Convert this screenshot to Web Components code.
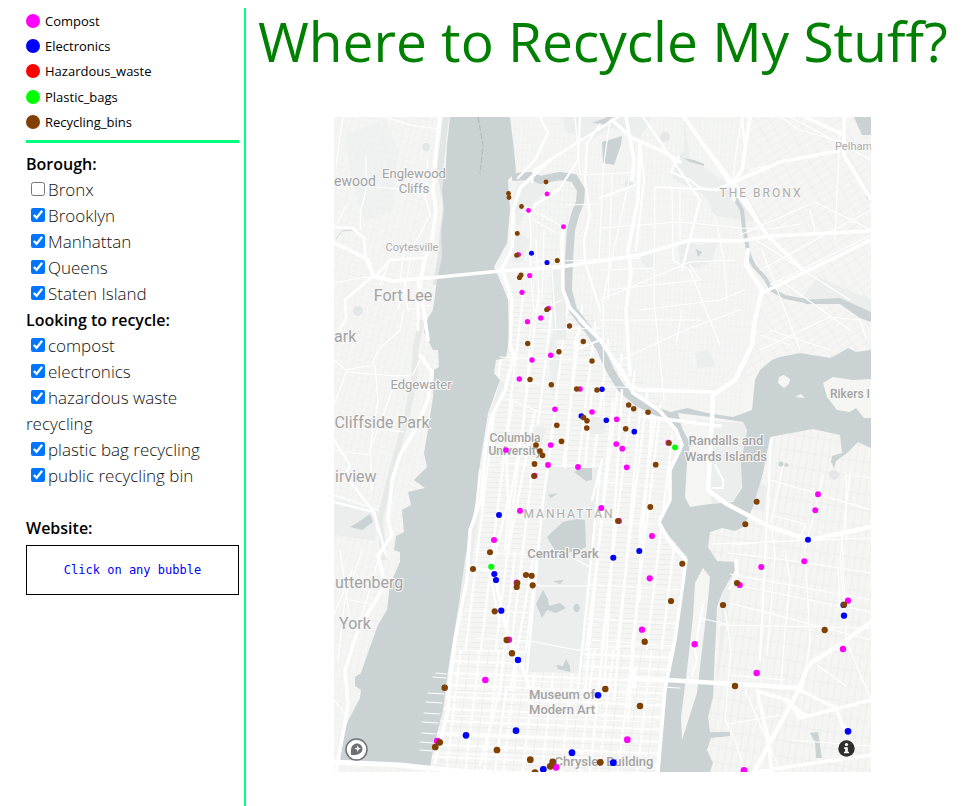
<!DOCTYPE html>
<html lang="en">
<head>
<meta charset="utf-8">
<title>Where to Recycle My Stuff?</title>
<style>
  body { margin: 0; background: #fff; font-family: "Open Sans", "Noto Sans", sans-serif; color: #000; }
</style>
</head>
<body>
<recycle-app></recycle-app>

<template id="t-app">
  <style>
    :host { display: grid; grid-template-columns: 246px minmax(0, 1fr); min-height: 100vh; box-sizing: border-box; padding-top: 8px; }
    aside { border-right: 2px solid #00ff7f; padding: 0 5px 0 26px; }
    .legend { display: grid; grid-auto-rows: 1fr; min-height: 127px; }
    hr { border: 0; height: 3px; margin: 5px 0 8px; background: #00ff7f; }
    main { min-width: 0; }
    h1 { margin: 0; padding-left: 12px; font-size: 55px; line-height: 66px; font-weight: 400; color: #008000; white-space: nowrap; }
    recycle-map { margin: 43px 107px 0 88px; }
  </style>
  <aside>
    <div class="legend">
      <legend-item style="--dot:#ff00ff">Compost</legend-item>
      <legend-item style="--dot:#0000ff">Electronics</legend-item>
      <legend-item style="--dot:#ff0000">Hazardous_waste</legend-item>
      <legend-item style="--dot:#00ff00">Plastic_bags</legend-item>
      <legend-item style="--dot:#804000">Recycling_bins</legend-item>
    </div>
    <hr>
    <filter-group heading="Borough:">
      <filter-check>Bronx</filter-check>
      <filter-check checked>Brooklyn</filter-check>
      <filter-check checked>Manhattan</filter-check>
      <filter-check checked>Queens</filter-check>
      <filter-check checked>Staten Island</filter-check>
    </filter-group>
    <filter-group heading="Looking to recycle:">
      <filter-check checked>compost</filter-check>
      <filter-check checked>electronics</filter-check>
      <filter-check checked>hazardous waste recycling</filter-check>
      <filter-check checked>plastic bag recycling</filter-check>
      <filter-check checked>public recycling bin</filter-check>
    </filter-group>
    <site-box heading="Website:">Click on any bubble</site-box>
  </aside>
  <main>
    <h1>Where to Recycle My Stuff?</h1>
    <recycle-map></recycle-map>
  </main>
</template>

<template id="t-legend">
  <style>
    :host { display: flex; align-items: center; gap: 5px; font-size: 13px; line-height: 20px; }
    i { width: 14px; height: 14px; border-radius: 50%; background: var(--dot); }
  </style>
  <i></i><span><slot></slot></span>
</template>

<template id="t-group">
  <style>
    :host { display: block; font-size: 17px; line-height: 26px; }
    h2 { margin: 0; font-size: 16px; line-height: 26px; font-weight: 600; }
    fieldset { margin: 0; padding: 0; border: 0; min-width: 0; }
  </style>
  <h2 id="h"></h2>
  <fieldset aria-labelledby="h"><slot></slot></fieldset>
</template>

<template id="t-check">
  <style>
    :host { display: block; font-weight: 300; color: #111; }
    input { width: 14px; height: 14px; margin: 0 3px 0 5px; vertical-align: baseline; }
  </style>
  <label><input type="checkbox"><slot></slot></label>
</template>

<template id="t-site">
  <style>
    :host { display: block; margin-top: 26px; }
    h2 { margin: 0 0 4px; font-size: 16px; line-height: 26px; font-weight: 600; }
    div { border: 1px solid #000; padding: 15px 10px; text-align: center; font: 12px/18px "DejaVu Sans Mono", monospace; }
    a { color: #0000ff; text-decoration: none; }
  </style>
  <h2></h2>
  <div><a href="#"><slot></slot></a></div>
</template>

<template id="t-map">
  <style>
    :host { display: block; position: relative; }
    svg.map { display: block; width: 100%; height: auto; }
    .land { fill: #f5f5f4; }
    .water { fill: #cad2d3; }
    .park { fill: #eceeee; }
    .creek { fill: none; stroke: #cad2d3; stroke-linejoin: round; }
    .road { fill: none; stroke: #fff; stroke-linejoin: round; stroke-linecap: round; }
    text { font-family: Roboto, "Liberation Sans", sans-serif; fill: #a3a3a3; stroke: #f7f7f6; stroke-width: 2px; paint-order: stroke; text-anchor: middle; }
    .c { font-size: 16px; }
    .d { font-size: 14px; }
    .s { font-size: 12px; font-weight: 500; }
    .l { font-size: 13px; font-weight: 500; }
    .n { font-weight: 400; }
    .m { font-size: 11px; fill: #adadad; }
    .b { font-size: 12px; fill: #adadad; letter-spacing: 2px; }
    .start { text-anchor: start; }
    a, button { position: absolute; padding: 0; border: 0; background: none; line-height: 0; cursor: pointer; }
    a { left: 11px; bottom: 11px; }
    button { right: 16px; bottom: 15px; }
  </style>
  <svg class="map" viewBox="334 117 537 655" role="img" aria-label="Map of recycling locations">
    <defs>
      <pattern id="man" width="15" height="5" patternUnits="userSpaceOnUse" patternTransform="matrix(1 .04 -.12 1 0 0)"><path d="M0 .5H15" stroke="#e8eaea" stroke-width=".8"/><path d="M1 0V5" stroke="#fff" stroke-width="2.2"/></pattern>
      <pattern id="mid" width="19" height="12" patternUnits="userSpaceOnUse" patternTransform="matrix(1 .04 -.12 1 3 2)"><path d="M0 2H19M1 0V12" stroke="#fff" stroke-width="2" fill="none"/><path d="M0 7H19M10 0V12" stroke="#eaecec" stroke-width=".7"/></pattern>
      <pattern id="nj" width="13" height="6" patternUnits="userSpaceOnUse" patternTransform="rotate(14)"><path d="M0 1H13M1 0V6M7 0V6" stroke="#edefee" stroke-width=".7" fill="none"/></pattern>
      <pattern id="bx" width="9" height="14" patternUnits="userSpaceOnUse" patternTransform="rotate(4)"><path d="M0 1H9M0 8H9M1 0V14M5 0V14" stroke="#eef0ef" stroke-width=".7" fill="none"/></pattern>
      <pattern id="be" width="12" height="7" patternUnits="userSpaceOnUse" patternTransform="rotate(-32)"><path d="M0 1H12M1 0V7" stroke="#ebedec" stroke-width=".7" fill="none"/></pattern>
      <pattern id="qn" width="7" height="16" patternUnits="userSpaceOnUse" patternTransform="rotate(9)"><path d="M0 1H7M1 0V16" stroke="#e9ebea" stroke-width=".7" fill="none"/></pattern>
    </defs>
    <rect class="land" x="334" y="117" width="537" height="655"/>
    <path fill="url(#nj)" d="M334 117H450V772H334Z"/>
    <path fill="url(#bx)" d="M500 117H735L750 240L765 290L740 420L660 410L570 320Z"/>
    <path fill="url(#be)" d="M735 117H871V380H740L765 290L745 220Z"/>
    <path fill="url(#qn)" d="M705 425H871V772H705Z"/>
    <path fill="url(#man)" d="M505 290H570L670 415L690 560L670 650H440L480 450Z"/>
    <path fill="url(#mid)" d="M442 650H680L660 772H425Z"/>
    <path fill="url(#bx)" d="M505 180H580L570 290H505Z"/>

    <!-- parks and green edges -->
    <g class="park">
      <path d="M548 467H599L580 673L527 672Z"/>
      <path d="M334 499L378 511L375 541L334 535Z"/>
      <path d="M517 183L542 179L546 190L525 212L517 230L514 200Z"/>
      <path d="M516 230L530 240L522 262L512 262Z"/>
      <path d="M537 425L547 428L536 460L527 452Z"/>
      <path d="M551 270H566V340H553Z"/>
      <path d="M587 418L606 414L604 434L590 434Z"/>
      <path d="M553 330L560 360L553 400L548 350Z"/>
      <path d="M500 380L490 415L480 500L465 560L458 610H464L474 550L484 480L492 420L506 385Z"/>
      <path d="M562 117H652L640 138L612 128L590 140L566 132Z"/>
      <path d="M684 117L690 158L730 185L756 215L752 222L715 216L704 195L672 178L676 160L684 150Z"/>
      <path d="M678 240L700 245L718 242L712 260L700 268L680 266Z"/>
      <path d="M637 255L656 251V270L646 267Z"/>
      <path d="M818 277L871 300V312L840 300L800 300Z"/>
      <path d="M695 353L708 350L716 366L698 368Z"/>
      <path d="M748 480L768 486L764 512L742 506Z"/>
      <path d="M722 593L732 580L729 605L722 650L716 700Z"/>
      <path d="M345 134L385 120L398 150L392 210L365 222L352 180Z" opacity=".6"/>
    </g>
    <path d="M446 117L440 170L446 205L440 260L436 285" fill="none" stroke="#dfe1e1" stroke-width="6" opacity=".8"/>
    <path d="M422 320L416 345L414 380L406 420L392 470L380 520L384 560" fill="none" stroke="#e3e5e5" stroke-width="6" opacity=".7"/>

    <!-- rivers -->
    <path class="water" d="M450 117H510L514 150L516 172L508 180L510 210L507 243L494 267L503 287L508 300L509 340L506 358L496 360L494 373L500 380L488 413L480 463L477 497L470 530L465 560L458 610L448 670L443 710L433 750L430 767L340 761L342 747L347 723L360 698L361 690L355 686V677L361 673L370 647L378 625L387 610L390 585L400 562V552L394 550L396 536L404 532L402 510L411 505L408 492L425 488L414 480L427 467L424 453L428 430L433 397L434 370L439 367L438 350H433L424 332L428 318L433 310L437 280L442 257L441 232L444 210L442 190L446 165L447 145Z"/>
    <path class="creek" stroke-width="8" d="M512 177L532 176L540 180L560 176L574 178L581 190L580 202L575 215L571 230L569 260L568 290L573 310L590 332L601 350L610 370L621 388L637 402L652 410L670 416"/>
    <path class="water" d="M667 413L687 408L707 413L733 417L752 410L755 380L760 370L772 360L780 357L800 353L830 358L838 354L848 348L856 352L871 350V448L858 442L847 453L836 461L834 468L831 462L832 456L842 453L840 435L813 429L770 437L763 473L753 507L743 527L735 531L722 528L710 532L708 547L717 561L734 562L735 570L722 593L717 607L715 650L713 697L708 717L710 732L730 732V736L711 738L707 750L713 763L710 772H658L663 717L667 683L675 640L680 590L687 557L670 537L660 522L669 503L670 473L682 450L680 437Z"/>
    <path class="creek" stroke-width="4" d="M735 198L742 210L744 228L748 250L750 258L754 266L765 278L772 290L785 297L806 301"/>
    <path class="water" d="M800 300L840 298L871 312V322L860 318L840 304L806 304Z"/>
    <path class="land" d="M678 413L710 417L743 422L747 430L741 463L742 488L733 502L710 504L690 507L685 497L687 463L690 443L682 428Z"/>
    <path class="park" d="M694 420L743 423L746 430L741 463L741 488L733 501L712 503L708 480L712 430Z"/>
    <path class="land" d="M871 379L853 380L833 377L823 383L827 397L837 410L850 412L856 408L864 418H871Z"/>
    <path class="land" d="M779 377L784 375L790 379L789 384L784 388L778 383ZM795 397L801 394L805 398Z"/>
    <path class="land" d="M703 568L710 577L708 600L702 650L697 693L682 740L681 717L687 670L693 617L695 583Z"/>
    <g class="water">
      <path d="M547 537L551 533L563 522L576 519L585 520L586 547L577 552H556Z"/>
      <path d="M574 472L581 468H592V480L586 481Z"/><path d="M548 495L558 493L551 498Z"/>
      <path d="M543 590L548 599L549 606L560 603L566 608L556 613L547 610L542 618L536 604Z"/>
      <path d="M553 581L564 580L560 584Z"/><ellipse cx="576.500" cy="608" rx="3" ry="4"/>
      <path d="M566 659L570 666V672L558 669L556 665L563 666Z"/>
      <path d="M350 527L357 523L370 514L373 522L362 530Z"/>
      <path d="M602 142L622 136L621 145L614 165L603 163Z"/>
      <path d="M592 123L608 117H614L604 124Z"/>
      <path d="M854 117H871V135H862Z"/><path d="M865 196L871 197V203Z"/>
      <path d="M696 249L702 252L698 257Z"/>
      <circle cx="781" cy="464" r="2.500"/><circle cx="786.500" cy="465" r="2"/>
      <path d="M810 733L818 732L822 758H816L815 742Z"/>
      <path d="M683 158L694 160L704 164V166L690 162Z"/>
    </g>
    <g fill="#e4e7e7"><circle cx="665" cy="137" r="5"/><circle cx="629" cy="184" r="4"/><circle cx="834" cy="475" r="5"/><circle cx="426" cy="147" r="4"/><circle cx="358" cy="311" r="5"/></g>

    <path d="M478 117L483 145L480 174" fill="none" stroke="#b6bbbd" stroke-width="1.200" stroke-dasharray="6 2"/>
    <path d="M336 239L342 231L354 230" fill="none" stroke="#d3d9da" stroke-width="1"/>
    <path class="road" stroke-width="1" d="M436 673L446 674M433 677L446 678M428 693L444 694M426 702L442 703M424 713L440 714M422 722L438 723M422 733L436 734M420 742L434 743M420 750L432 751"/>

    <!-- small roads -->
    <g class="road" stroke-width="1.200">
      <path d="M343 117L336 165M385 117L410 125L440 129M366 156V190L361 210L360 230M338 222L346 205M366 186L430 192M428 160L425 195L430 215L412 250L407 280L398 310M334 283L365 277L383 280M404 250L400 282M388 265L380 285M334 360L346 370L372 365L378 350L400 330L404 310M346 372L334 405M347 372L395 376L413 375L420 360M375 365L378 400L370 450L372 490M398 375L385 410L370 450M334 450L368 455M334 495L378 510M334 425L404 432M404 280L408 310L430 305"/>
      <path d="M340 550L350 620M362 550L345 600L338 660M334 615L352 570M350 600L375 605M334 700L346 715M358 630L378 560L384 550"/>
      <path d="M529 210L531 235L530 270L534 310L528 345M545 200L560 190M520 212L545 215M530 218L555 232M522 205L560 225M540 330L600 328M552 270L556 330M536 240L540 320M544 230L542 300M566 205L600 204M530 262L640 258M540 310L562 300"/>
      <path d="M575 117L580 175L640 172M610 120L603 170L599 260M629 180L603 300L604 420M655 188L654 300L664 400M672 190L673 260L690 270L720 345M600 228L680 222L762 230L800 224M600 300L690 262L735 260M680 190V240M715 215L724 260L727 300M606 290L700 280L690 265M640 310L720 300L744 290M620 360L690 328L740 310M682 310L676 345M600 320L700 320M600 270L655 268M612 175L608 300"/>
      <path d="M742 117L735 160L733 180M780 117L800 130L871 150M790 117L871 160M750 170L790 160L842 150M740 235L815 202L871 230M760 270L871 210M770 285L871 235M780 280L850 330M756 240L850 300M762 250L800 350M840 130L835 240M810 210L815 230M760 350L830 317L860 320L866 338M770 330L830 350M760 335L790 345"/>
      <path d="M500 357L600 361M520 383L690 390M505 398L540 412L606 417M500 463L597 467M480 516L546 518M474 552L540 555M465 611L532 613M475 638L530 641L577 650L640 645M455 678L600 684L680 688M452 692L660 699M448 715L655 722M445 735L655 742M440 753L650 760M600 482L655 485M598 522L655 524M590 585L680 590M585 618L675 624M588 640L672 646M530 580L540 586L590 586M577 560L590 567"/>
      <path d="M728 553L795 561L871 573M730 574L871 600M735 585L871 612M718 625L871 628M730 603L871 640M725 610L731 650L725 720L735 740L745 772M771 480L871 510M783 466L771 522M823 476L805 550L810 640L806 670M846 540V475L871 478M850 473L840 560L846 630M772 530L775 555L767 655M785 550L790 580L780 690M730 675L785 680M745 690L780 770M728 724L780 715M757 690L770 740L772 772M842 535L846 640L871 700M700 618L730 625M732 545L770 542M713 544L871 538M838 565L840 610M817 665L846 686M772 515L805 524L800 540M836 710L850 735M790 740L871 746"/>
    </g>
    <!-- avenues and parkways -->
    <g class="road" stroke-width="2.200">
      <path d="M618 117L550 160L534 170L532 182M540 117L548 133L535 160L518 178M580 117L578 160L560 188L535 205M600 125L587 143L585 180L590 215L584 240L585 262L600 310M536 205L530 215M530 350L524 420L510 500L505 550M535 410L508 552M513 400L506 440L508 500L494 560L492 575M576 340L565 467M600 340L575 350M592 390L585 467M574 345L579 330M555 410L548 467L543 500L527 672M600 470L577 700M613 400L585 690M622 390L604 690M640 410L614 700M652 415L628 720M655 420L640 530L640 600M490 575L500 625M533 560L510 690M515 552L500 690L480 765M506 690L495 770M612 560L590 772M480 470L475 520"/>
      <path d="M643 117L700 200L682 270M640 143L644 180L636 250M635 185L600 198M655 187L720 190M684 117L750 205L762 230L770 240M679 157L671 172L690 180L700 188L717 190M742 117L745 150M760 660L771 440"/>
      <path d="M602 460L592 500M334 440L350 465L345 475L374 512L378 530"/>
    </g>
    <!-- highways -->
    <g class="road" stroke-width="3.500">
      <path d="M440 117L436 150L433 190L436 210L432 240L424 262L420 285L428 340"/>
      <path d="M334 243L350 250L368 260L373 275L392 281L440 277L500 271L560 267L640 255L690 240L740 241L770 236L871 231"/>
      <path d="M334 227L352 228L364 238L366 260L374 277M374 275L345 300L346 318L334 340M375 277L390 260L425 258M418 282V330" stroke-width="2.500"/>
      <path d="M420 355L432 372L428 400L415 430L400 455L392 480L388 520L392 535L378 555L385 585L358 630L345 670L348 705L336 772"/>
      <path d="M334 502L374 512L386 555" stroke-width="2.500"/>
      <path d="M550 160L520 188L513 210L512 250L502 268L512 300L510 345L514 355L505 390L492 415L486 445L481 500L470 530L467 580L455 640L450 680L448 710L435 762"/>
      <path d="M640 144L638 200L628 250L631 272L626 310L630 375"/>
      <path d="M612 120L632 138L660 150L680 162M750 117L742 170L735 180L734 200"/>
      <path d="M684 117L735 190L768 236L805 272M716 190L780 162L842 150M805 117L844 135M844 117V155L871 200"/>
      <path d="M748 250L746 265L762 290L755 320L752 345L735 380L713 395L712 420L708 490L725 503L770 527L810 540L871 527" stroke-width="4.500"/>
      <path d="M764 292L871 240M713 392L640 390L630 385L600 340L570 308L563 290L562 240L564 225"/>
      <path d="M626 117L634 160L632 180M580 320L600 340L625 375L633 393L660 411L676 430L682 445L670 470L670 500L659 522L668 540L686 560L684 575L675 640L665 690L658 772"/>
      <path d="M640 416L720 426M470 567L494 572L505 625L520 660L530 690V715"/>
      <path d="M634 678L700 682L800 688L806 670L812 662L840 645L871 622M800 688L755 770M634 670V686" stroke-width="4.500"/>
      <path d="M760 692L788 700L800 718L871 700M800 690L836 708L844 730M784 700L805 715M736 560L737 575L730 588M871 755L800 765L755 772M757 690L768 740L772 772"/>
      <path d="M334 762L400 765L475 773" stroke-width="5"/>
      <path d="M703 605L700 620L695 650L697 660L692 675M715 465L723 480V488H712" stroke-width="1.800"/>
    </g>

    <!-- place names -->
    <text class="d start" x="334" y="186">ewood</text>
    <text class="l n" x="414" y="178">Englewood</text>
    <text class="l n" x="414" y="193">Cliffs</text>
    <text class="m" x="412" y="251">Coytesville</text>
    <text class="c" x="403" y="301">Fort Lee</text>
    <text class="c start" x="334" y="342">ark</text>
    <text class="l n" x="421" y="389">Edgewater</text>
    <text class="c" x="382" y="428">Cliffside Park</text>
    <text class="c start" x="335" y="482">irview</text>
    <text class="c start" x="335" y="588">uttenberg</text>
    <text class="c" x="355" y="629">York</text>
    <text class="s" x="515" y="442">Columbia</text>
    <text class="s" x="515" y="455">University</text>
    <text class="b" x="569" y="518">MANHATTAN</text>
    <text class="l" x="563" y="558">Central Park</text>
    <text class="l" x="562" y="699">Museum of</text>
    <text class="l" x="562" y="714">Modern Art</text>
    <text class="l" x="604" y="766">Chrysler Building</text>
    <text class="l" x="726" y="445">Randalls and</text>
    <text class="l" x="726" y="461">Wards Islands</text>
    <text class="b" x="761" y="197">THE BRONX</text>
    <text class="m start" x="835" y="150">Pelham</text>
    <text class="s start" x="830" y="398">Rikers I</text>
    <g id="dots"></g>
  </svg>
  <a href="#" aria-label="Mapbox">
    <svg width="23" height="23" viewBox="0 0 23 23"><circle cx="11.500" cy="11.500" r="10.500" fill="#fff" stroke="#6e7273" stroke-width="1.500"/><path d="M6 17C5.500 12 6 9 8 7.200C10.500 5 14 5.200 16 7.200C18 9.300 18 12.500 15.800 14.800C13.500 17 10 17.300 6 17Z" fill="#6e7273"/><path d="M12.700 7.200L13.600 9.700L16 10.600L13.600 11.500L12.700 14L11.800 11.500L9.400 10.600L11.800 9.700Z" fill="#fff"/></svg>
  </a>
  <button type="button" aria-label="Toggle attribution">
    <svg width="17" height="17" viewBox="0 0 17 17"><circle cx="8.500" cy="8.500" r="8.200" fill="#2f2f2f"/><circle cx="8.500" cy="4.500" r="1.600" fill="#fff"/><path d="M6 7.200H9.800V11.700H11V13.200H6V11.700H7.200V8.700H6Z" fill="#fff"/></svg>
  </button>
</template>

<script>
  class Base extends HTMLElement {
    constructor(id) {
      super();
      this.attachShadow({ mode: 'open' }).append(document.getElementById(id).content.cloneNode(true));
    }
  }

  const SITES = [
    ['#ff00ff', [547,194, 528.5,210.5, 563.5,226.7, 518.5,254.5, 529.7,275.5, 522,292.3, 548.5,308.3, 540.7,318, 527.5,321.7,
      532,360, 550.7,355.3, 519.3,379, 580,389, 555,409.3, 592,412, 550.7,445, 506,450, 548,465, 578,467, 534.7,475.7, 520,510.7, 601.3,508, 494,540,
      616.7,419.3, 616.3,444, 622.3,448.7, 626.7,467.3, 668.3,442.7, 619,521, 652,536, 818,494.3, 815.3,510.3,
      516.7,582.7, 509,639.7, 485.3,680, 437.3,741, 556,767.3, 649.7,578.3, 642,629.7, 694.7,644.3, 627.3,739.7, 761.3,567, 804.3,561.3,
      739.7,585, 848,600.7, 843,649, 756.7,673, 744,770.3]],
    ['#0000ff', [531.5,253.3, 547,262.5, 602,389.3, 581.3,416, 606.3,420.3, 499,515, 634.3,431.7, 639.3,551, 613.3,557.7, 808,539.7,
      494.3,574, 496,580, 501.3,610.7, 518,660, 598,695.3, 466,735.3, 516,730.7, 572,752.7, 543.3,769.3, 613.3,762.7, 843.5,605, 844,615.7, 848,731.3]],
    ['#00ff00', [675,447.3, 491.3,566.7]],
    ['#804000', [546,182, 508.5,193.5, 509,197.5, 521.5,206.5, 517.3,233.5, 516.7,255.3, 557.3,260.5, 521,275, 519.5,277.5, 546.8,309.5, 569.5,326,
      527.7,343.5, 559,351.7, 583.3,341.5, 592,361, 530,379.5, 551.3,384.7, 576.7,389, 597,390, 583.5,417.5, 587,420.7, 586.8,428, 556.8,425.3,
      561.5,441.3, 536,445, 540,451, 542.5,455.3, 534.5,464, 534,476, 490,552.3, 628.7,405, 633.7,408.7, 648,412.3, 625.7,428.7, 669,443,
      655.7,464.7, 650.3,507, 756.7,501.7, 745.3,524.3, 618,521, 473,569, 526,575, 531.7,575.7, 517.3,583, 516.7,587, 532.7,585.3, 494.7,611.3,
      506.7,640, 512,653.3, 444.7,687.7, 605.3,689, 439.7,742.3, 435.3,747, 497,750, 530.3,759.7, 552.7,762, 550.3,766.3, 535,772.7, 600.3,762.3,
      682.3,563.7, 671,601, 644.7,641.7, 640,706, 723,605, 737,583, 844,604.7, 824.7,630, 735,686]]
  ];

  customElements.define('legend-item', class extends Base { constructor() { super('t-legend'); } });
  customElements.define('filter-group', class extends Base {
    constructor() { super('t-group'); }
    connectedCallback() { this.shadowRoot.querySelector('h2').textContent = this.getAttribute('heading'); }
  });
  customElements.define('filter-check', class extends Base {
    constructor() { super('t-check'); }
    connectedCallback() { this.shadowRoot.querySelector('input').checked = this.hasAttribute('checked'); }
  });
  customElements.define('site-box', class extends Base {
    constructor() { super('t-site'); }
    connectedCallback() { this.shadowRoot.querySelector('h2').textContent = this.getAttribute('heading'); }
  });
  customElements.define('recycle-map', class extends Base {
    constructor() {
      super('t-map');
      const layer = this.shadowRoot.getElementById('dots');
      for (const [colour, pts] of SITES) {
        for (let i = 0; i < pts.length; i += 2) {
          const c = document.createElementNS('http://www.w3.org/2000/svg', 'circle');
          c.setAttribute('cx', pts[i]);
          c.setAttribute('cy', pts[i + 1]);
          c.setAttribute('r', 2.4 + (pts[i + 1] - 180) / 590);
          c.setAttribute('fill', colour);
          layer.append(c);
        }
      }
    }
  });
  customElements.define('recycle-app', class extends Base { constructor() { super('t-app'); } });
</script>
</body>
</html>
